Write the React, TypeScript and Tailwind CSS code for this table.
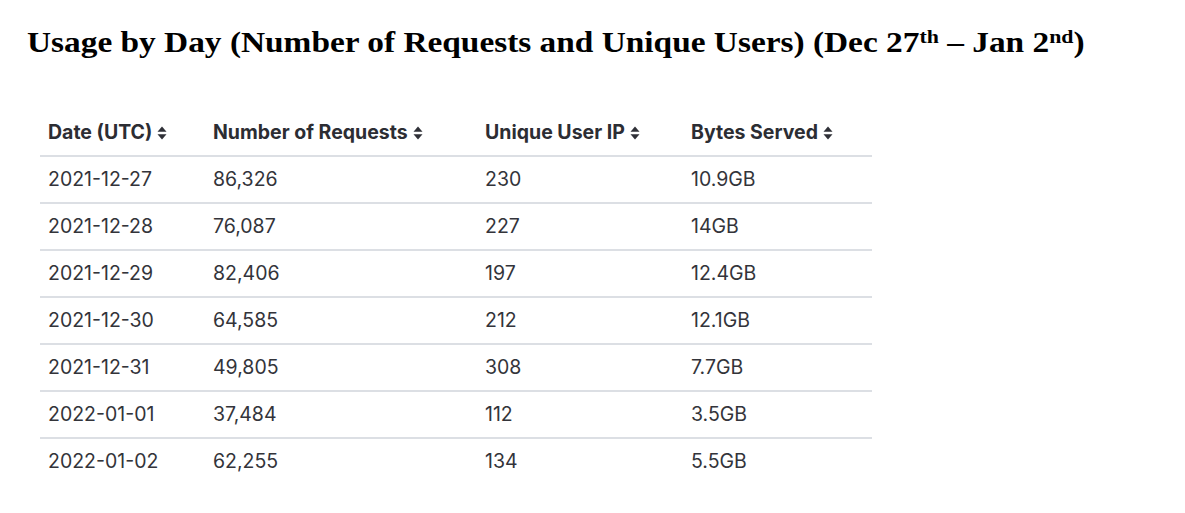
import React from 'react';

const rows = [
  { date: '2021-12-27', requests: '86,326', users: '230', bytes: '10.9GB' },
  { date: '2021-12-28', requests: '76,087', users: '227', bytes: '14GB' },
  { date: '2021-12-29', requests: '82,406', users: '197', bytes: '12.4GB' },
  { date: '2021-12-30', requests: '64,585', users: '212', bytes: '12.1GB' },
  { date: '2021-12-31', requests: '49,805', users: '308', bytes: '7.7GB' },
  { date: '2022-01-01', requests: '37,484', users: '112', bytes: '3.5GB' },
  { date: '2022-01-02', requests: '62,255', users: '134', bytes: '5.5GB' },
];

const SortIcon: React.FC = () => (
  <svg width="10" height="14" viewBox="0 0 10 14" className="ml-[5px] inline-block">
    <path d="M5 0.5 L9.5 5.8 L0.5 5.8 Z" fill="#2f3037" />
    <path d="M5 13.5 L9.5 8.2 L0.5 8.2 Z" fill="#2f3037" />
  </svg>
);

const headers = ['Date (UTC)', 'Number of Requests', 'Unique User IP', 'Bytes Served'];
const widths = ['w-[165px]', 'w-[272px]', 'w-[206px]', 'w-[189px]'];

export default function App() {
  return (
    <div className="w-[1185px] h-[513px] bg-white overflow-hidden">
      <h1 className="ml-[27px] pt-[22px] origin-left scale-x-[1.15] whitespace-nowrap text-[29px] leading-[40px] font-bold text-black font-['Liberation_Serif',serif]">
        Usage by Day (Number of Requests and Unique Users) (Dec 27
        <sup className="text-[19px]">th</sup> – Jan 2<sup className="text-[19px]">nd</sup>)
      </h1>

      <table className="ml-[40px] mt-[48px] border-collapse font-['Inter',sans-serif] text-[19.5px]">
        <thead>
          <tr className="border-b-2 border-[#dcdfe4]">
            {headers.map((h, i) => (
              <th
                key={h}
                className={`${widths[i]} px-2 h-[46px] text-left font-bold text-[#2c2d33]`}
              >
                <span className="inline-flex items-center whitespace-nowrap">
                  {h}
                  <SortIcon />
                </span>
              </th>
            ))}
          </tr>
        </thead>
        <tbody>
          {rows.map((r, idx) => (
            <tr
              key={r.date}
              className={idx < rows.length - 1 ? 'border-b-2 border-[#dcdfe4]' : ''}
            >
              <td className="px-2 h-[47px] text-[#33343a]">{r.date}</td>
              <td className="px-2 h-[47px] text-[#33343a]">{r.requests}</td>
              <td className="px-2 h-[47px] text-[#33343a]">{r.users}</td>
              <td className="px-2 h-[47px] text-[#33343a]">{r.bytes}</td>
            </tr>
          ))}
        </tbody>
      </table>
    </div>
  );
}
